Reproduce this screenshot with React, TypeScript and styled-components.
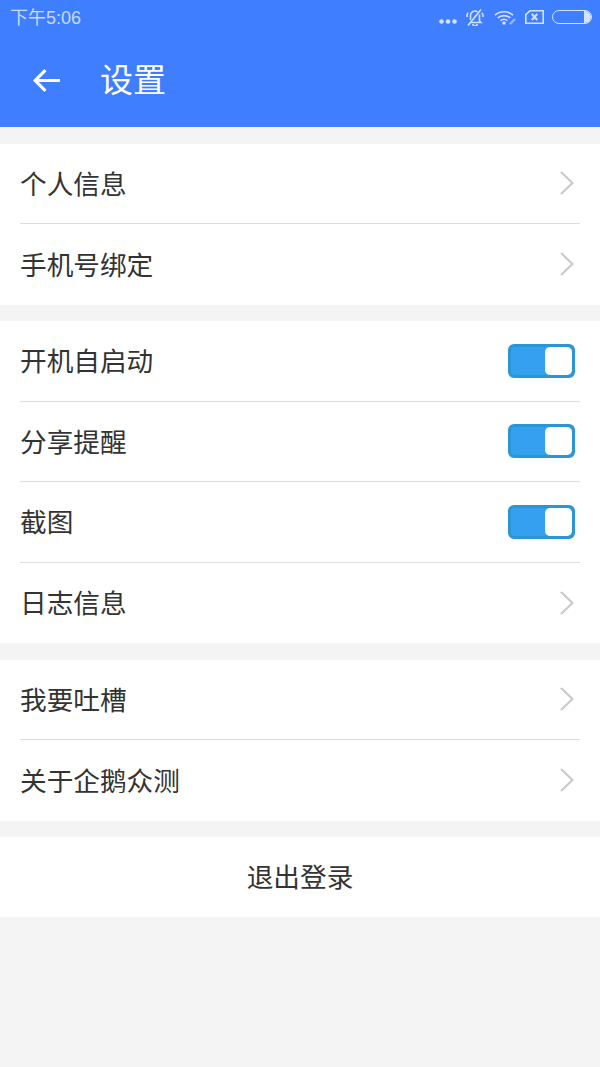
import React from "react";
import styled, { createGlobalStyle } from "styled-components";

const GlobalStyle = createGlobalStyle`
  html, body {
    margin: 0;
    padding: 0;
    background: #f4f4f4;
  }
`;

const App = () => {
  return (
    <Page>
      <GlobalStyle />
      <Header>
        <StatusBar>
          <Time>下午5:06</Time>
          <StatusIcons>
            <Dots viewBox="0 0 18 5">
              <circle cx="2.500" cy="2.500" r="2.300" />
              <circle cx="9" cy="2.500" r="2.300" />
              <circle cx="15.500" cy="2.500" r="2.300" />
            </Dots>
            <BellOff viewBox="0 0 20 17">
              <path d="M5.500 11V6.500a4.500 4.500 0 0 1 7-3.700M14.500 5.500V12l1.500 1.500H6" />
              <path d="M8 15a2 2 0 0 0 4 0M2.200 8c-.5-1.500 0-3.200 1-4.300M17.800 8c.5-1.500 0-3.200-1-4.300" />
              <path d="M3 16.500L16 .5" />
            </BellOff>
            <Wifi viewBox="0 0 23 15">
              <path d="M1 5.200a13.500 13.500 0 0 1 18 0M3.700 8a9.500 9.500 0 0 1 12.600 0M6.500 10.700a5.400 5.400 0 0 1 7 0" />
              <circle cx="10" cy="13" r="1.700" fill="#d4e2ff" stroke="none" />
              <path d="M16 14l5-5" strokeWidth="2.200" opacity=".6" />
            </Wifi>
            <SimCard viewBox="0 0 19 14">
              <path d="M5 .8h13.200v12.400H.8V4.700z" />
              <path d="M6.800 4l5.400 6M12.200 4l-5.400 6" strokeWidth="2" />
            </SimCard>
            <Battery>
              <BatteryLevel />
            </Battery>
          </StatusIcons>
        </StatusBar>
        <TitleBar>
          <BackIcon viewBox="0 0 28 24">
            <path d="M27 12H3M13 2L3 12l10 10" />
          </BackIcon>
          <Title>设置</Title>
        </TitleBar>
      </Header>
      <Content>
        <Group>
          <Row>
            <Label>个人信息</Label>
            <Chevron />
          </Row>
          <Row $last>
            <Label>手机号绑定</Label>
            <Chevron />
          </Row>
        </Group>
        <Group>
          <Row>
            <Label>开机自启动</Label>
            <Toggle />
          </Row>
          <Row>
            <Label>分享提醒</Label>
            <Toggle />
          </Row>
          <Row>
            <Label>截图</Label>
            <Toggle />
          </Row>
          <Row $last>
            <Label>日志信息</Label>
            <Chevron />
          </Row>
        </Group>
        <Group>
          <Row>
            <Label>我要吐槽</Label>
            <Chevron />
          </Row>
          <Row $last>
            <Label>关于企鹅众测</Label>
            <Chevron />
          </Row>
        </Group>
        <Logout>
          <Label>退出登录</Label>
        </Logout>
      </Content>
    </Page>
  );
};

const Chevron = () => (
  <ChevronIcon viewBox="0 0 16 26">
    <path d="M2 2l11.500 11L2 24" />
  </ChevronIcon>
);

const Toggle = () => (
  <ToggleTrack>
    <ToggleKnob />
  </ToggleTrack>
);

export default App;

const Page = styled.div`
  width: 600px;
  height: 1067px;
  overflow: hidden;
  background: #f4f4f4;
  font-family: "Noto Sans CJK SC", "Noto Sans", sans-serif;
`;

const Header = styled.div`
  height: 127px;
  background: #3e7eff;
`;

const StatusBar = styled.div`
  height: 34px;
  padding: 0 8px 0 10px;
  display: flex;
  align-items: center;
  justify-content: space-between;
`;

const Time = styled.span`
  font-family: "Liberation Sans", "Noto Sans CJK SC", sans-serif;
  font-size: 18px;
  line-height: 20px;
  margin-top: 1px;
  color: #c9dafe;
`;

const StatusIcons = styled.div`
  display: flex;
  align-items: center;
  svg {
    fill: none;
    stroke: #d4e2ff;
    stroke-width: 1.6;
  }
`;

const Dots = styled.svg`
  width: 18px;
  height: 5px;
  margin-top: 9px;
  && {
    fill: #d4e2ff;
    stroke: none;
  }
`;

const BellOff = styled.svg`
  width: 20px;
  height: 17px;
  margin-left: 8px;
`;

const Wifi = styled.svg`
  width: 23px;
  height: 15px;
  margin-left: 9px;
`;

const SimCard = styled.svg`
  width: 19px;
  height: 14px;
  margin-left: 8px;
  margin-bottom: 1px;
`;

const Battery = styled.div`
  width: 40px;
  height: 14px;
  box-sizing: border-box;
  margin-left: 8px;
  border: 1.5px solid #d4e2ff;
  border-radius: 7px;
  position: relative;
  overflow: hidden;
`;

const BatteryLevel = styled.div`
  position: absolute;
  right: 0;
  top: 0;
  bottom: 0;
  width: 7px;
  background: #d4e2ff;
`;

const TitleBar = styled.div`
  height: 93px;
  display: flex;
  align-items: center;
  padding: 0 0 0 32px;
`;

const BackIcon = styled.svg`
  width: 29px;
  height: 25px;
  margin-bottom: 1px;
  fill: none;
  stroke: #fff;
  stroke-width: 3;
`;

const Title = styled.span`
  margin-left: 39px;
  font-size: 33px;
  line-height: 40px;
  margin-bottom: 5px;
  color: #fff;
`;

const Content = styled.div`
  display: flex;
  flex-direction: column;
  padding-top: 16.500px;
  gap: 16.500px;
`;

const Group = styled.div`
  background: #fff;
  padding: 0 20px;
`;

const Row = styled.div<{ $last?: boolean }>`
  height: 80.500px;
  box-sizing: border-box;
  display: flex;
  align-items: center;
  justify-content: space-between;
  border-bottom: ${(p) => (p.$last ? "none" : "1px solid #dcdcdc")};
`;

const Label = styled.span`
  font-size: 26.670px;
  line-height: 36px;
  margin-bottom: 1px;
  color: #333;
`;

const ChevronIcon = styled.svg`
  width: 16px;
  height: 26px;
  margin-right: 5px;
  fill: none;
  stroke: #c8c8c8;
  stroke-width: 2;
`;

const ToggleTrack = styled.div`
  width: 67px;
  height: 34px;
  box-sizing: border-box;
  margin-right: 5px;
  background: #34a0ef;
  border: 3px solid #2a97d4;
  border-radius: 6px;
  display: flex;
  justify-content: flex-end;
`;

const ToggleKnob = styled.div`
  width: 27px;
  height: 100%;
  background: #fff;
  border-radius: 5px;
`;

const Logout = styled.div`
  height: 79.500px;
  background: #fff;
  display: flex;
  align-items: center;
  justify-content: center;
`;
